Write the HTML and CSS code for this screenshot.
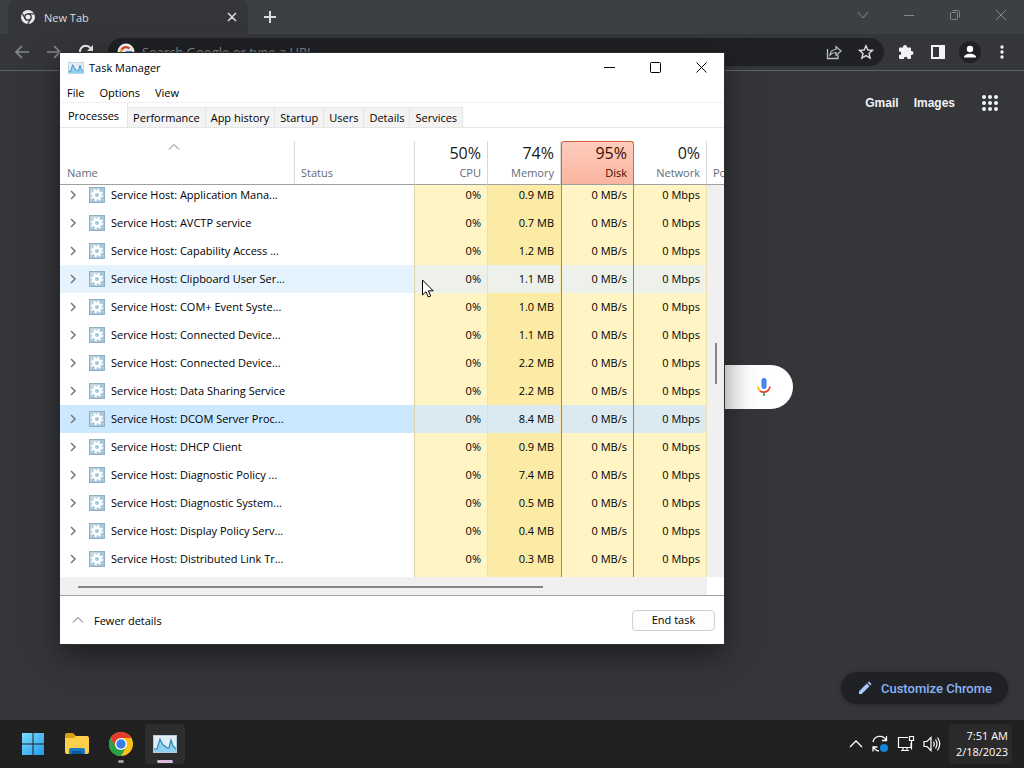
FILE: index.html
```html
<!DOCTYPE html>
<html lang="en">
<head>
  <meta charset="UTF-8">
  <meta name="viewport" content="width=device-width, initial-scale=1.0">
  <title>Desktop</title>
  <link rel="stylesheet" href="styles.css">
</head>
<body>
  <!-- Shared symbols -->
  <svg class="symbols" aria-hidden="true">
    <symbol id="gear" viewBox="0 0 16 16">
      <rect x="0.5" y="0.5" width="15" height="15" fill="#a9c7dc" stroke="#8fb0c4"/>
      <path d="M1 15V1H9Z" fill="#bcd5e4"/>
      <circle cx="8" cy="8" r="3.3" fill="none" stroke="#fff" stroke-width="2.4"/>
      <circle cx="8" cy="8" r="5.2" fill="none" stroke="#fff" stroke-width="2" stroke-dasharray="2.04 2.04"/>
    </symbol>
    <symbol id="expand" viewBox="0 0 8 10">
      <path d="M2 1l4 4-4 4" fill="none" stroke="#777" stroke-width="1.5"/>
    </symbol>
    <symbol id="up" viewBox="0 0 12 8">
      <path d="M1 6.5l5-5 5 5" fill="none" stroke="currentColor"/>
    </symbol>
    <symbol id="graph" viewBox="0 0 24 18">
      <rect x="0.5" y="0.5" width="23" height="17" fill="#e3edf5" stroke="#b9cbd8"/>
      <path d="M1 14l3 0 3-10 3 6 2 1 2 2 2 0 2-8 2 6 3 3v3H1z" fill="#8fd0ee"/>
      <path d="M1 14l3 0 3-10 3 6 2 1 2 2 2 0 2-8 2 6 3 3" fill="none" stroke="#2a86bd" stroke-width="1.2"/>
    </symbol>
  </svg>

  <!-- Browser -->
  <main class="browser">
    <div class="tab-strip">
      <div class="browser-tab">
        <svg width="14" height="14" viewBox="0 0 14 14">
          <circle cx="7" cy="7" r="7" fill="#e8eaed"/>
          <circle cx="7" cy="7" r="3.2" fill="#e8eaed" stroke="#35363a" stroke-width="1.3"/>
          <path d="M7 3.8h6.3M4.2 8.6L1.1 3.3M9.8 8.6L6.7 13.8" stroke="#35363a" stroke-width="1.2"/>
        </svg>
        <span>New Tab</span>
        <button class="plain" aria-label="Close tab"><svg width="10" height="10" viewBox="0 0 10 10"><path d="M1 1l8 8M9 1L1 9" stroke="#dadce0" stroke-width="1.5"/></svg></button>
      </div>
      <button class="plain new-tab" aria-label="New tab"><svg width="14" height="14" viewBox="0 0 14 14"><path d="M7 1v12M1 7h12" stroke="#dadce0" stroke-width="2"/></svg></button>
      <div class="browser-controls">
        <button class="plain" aria-label="Search tabs"><svg width="12" height="12" viewBox="0 0 12 12"><path d="M1 3l5 6 5-6" fill="none" stroke="#85888b"/></svg></button>
        <button class="plain" aria-label="Minimize"><svg width="12" height="12" viewBox="0 0 12 12"><path d="M1 6.5h10" stroke="#85888b"/></svg></button>
        <button class="plain" aria-label="Restore"><svg width="12" height="12" viewBox="0 0 12 12"><rect x="1.5" y="3.5" width="7" height="7" rx="1" fill="none" stroke="#85888b"/><path d="M3.5 1.5h5a2 2 0 0 1 2 2v5" fill="none" stroke="#85888b"/></svg></button>
        <button class="plain" aria-label="Close"><svg width="12" height="12" viewBox="0 0 12 12"><path d="M1 1l10 10M11 1L1 11" stroke="#85888b"/></svg></button>
      </div>
    </div>

    <div class="toolbar">
      <button class="plain" aria-label="Back"><svg width="16" height="16" viewBox="0 0 16 16"><path d="M15 8H2M8 2L2 8l6 6" fill="none" stroke="#85888b" stroke-width="1.7"/></svg></button>
      <button class="plain" aria-label="Forward"><svg width="16" height="16" viewBox="0 0 16 16"><path d="M1 8h13M8 2l6 6-6 6" fill="none" stroke="#85888b" stroke-width="1.7"/></svg></button>
      <button class="plain" aria-label="Reload"><svg width="16" height="16" viewBox="0 0 16 16"><path d="M13.5 10A6 6 0 1 1 12.5 4" fill="none" stroke="#f1f3f4" stroke-width="2"/><path d="M15 1v6H9z" fill="#f1f3f4"/></svg></button>
      <div class="omnibox">
        <svg width="18" height="18" viewBox="0 0 18 18">
          <circle cx="9" cy="9" r="8.5" fill="#fff"/>
          <path d="M12.5 5.5A5 5 0 0 0 4.5 6.8" fill="none" stroke="#ea4335" stroke-width="2.2"/>
          <path d="M4.5 6.8a5 5 0 0 0 0 4.4" fill="none" stroke="#fbbc05" stroke-width="2.2"/>
          <path d="M4.5 11.2a5 5 0 0 0 7.8 1.4" fill="none" stroke="#34a853" stroke-width="2.2"/>
          <path d="M9 9h5a5 5 0 0 1-1.7 3.6" fill="none" stroke="#4285f4" stroke-width="2.2"/>
        </svg>
        <input type="text" placeholder="Search Google or type a URL" aria-label="Address">
        <button class="plain" aria-label="Share"><svg width="16" height="16" viewBox="0 0 16 16"><path d="M1.5 5v9.5H12V11" fill="none" stroke="#bdc1c6" stroke-width="1.3"/><path d="M4 11c.3-3.5 2.5-5.5 6-5.5v-3L15 7l-5 4.5v-3c-2.5 0-4.5.7-6 2.5z" fill="none" stroke="#bdc1c6" stroke-width="1.2"/></svg></button>
        <button class="plain" aria-label="Bookmark"><svg width="16" height="16" viewBox="0 0 16 16"><path d="M8 1.7l1.9 4.3 4.6.4-3.5 3 1.1 4.6L8 11.6 3.9 14 5 9.4l-3.5-3 4.6-.4z" fill="none" stroke="#dadce0" stroke-width="1.4"/></svg></button>
      </div>
      <button class="plain" aria-label="Extensions"><svg width="16" height="16" viewBox="0 0 16 16"><path d="M1 4.500a1 1 0 0 1 1-1h3V3a2 2 0 0 1 4 0v.5h3a1 1 0 0 1 1 1V7h.5a2 2 0 0 1 0 4H13v3a1 1 0 0 1-1 1H9.500v-.5a1.800 1.800 0 0 0-3.600 0v.5H2a1 1 0 0 1-1-1v-3h.5a1.800 1.800 0 0 0 0-3.600H1z" fill="#f1f3f4"/></svg></button>
      <button class="plain" aria-label="Side panel"><svg width="16" height="16" viewBox="0 0 16 16"><path d="M1 1h14v14H1zM3 3v10h6V3z" fill="#f1f3f4" fill-rule="evenodd"/></svg></button>
      <button class="plain" aria-label="Profile"><svg width="22" height="22" viewBox="0 0 22 22"><circle cx="11" cy="11" r="11" fill="#202124"/><circle cx="11" cy="8" r="3.2" fill="#fff"/><path d="M5 16.500c0-5 12-5 12 0z" fill="#fff"/></svg></button>
      <button class="plain" aria-label="Menu"><svg width="16" height="16" viewBox="0 0 16 16"><circle cx="8" cy="3" r="1.7" fill="#f1f3f4"/><circle cx="8" cy="8" r="1.7" fill="#f1f3f4"/><circle cx="8" cy="13" r="1.7" fill="#f1f3f4"/></svg></button>
    </div>

    <div class="new-tab-page">
      <nav class="google-links">
        <a href="#">Gmail</a>
        <a href="#">Images</a>
        <button class="plain" aria-label="Google apps">
          <svg width="18" height="18" viewBox="0 0 18 18"><path d="M3 3h.01M9 3h.01M15 3h.01M3 9h.01M9 9h.01M15 9h.01M3 15h.01M9 15h.01M15 15h.01" stroke="#f1f3f4" stroke-width="4" stroke-linecap="round"/></svg>
        </button>
      </nav>
      <div class="search-box">
        <input type="text" aria-label="Search">
        <button class="plain" aria-label="Search by voice">
          <svg width="18" height="20" viewBox="0 0 18 20">
            <rect x="6.5" y="1" width="5" height="11" rx="2.5" fill="#4285f4"/>
            <path d="M3 9.500a6 6 0 0 0 2 4.300" fill="none" stroke="#fbbc05" stroke-width="1.7"/>
            <path d="M5 13.800c2.500 2.500 9 1.700 10-4.300" fill="none" stroke="#ea4335" stroke-width="1.7"/>
            <path d="M9 15.500V19" stroke="#34a853" stroke-width="1.7"/>
          </svg>
        </button>
      </div>
      <button class="customize">
        <svg width="14" height="14" viewBox="0 0 14 14"><path d="M1 13v-2.700L8.800 2.500l2.700 2.700L3.700 13zM9.600 1.700L11 .5 13.500 3l-1.200 1.400z" fill="#a8c7fa"/></svg>
        Customize Chrome
      </button>
    </div>
  </main>

  <!-- Task Manager -->
  <section class="task-manager">
    <header class="title-bar">
      <svg class="app-icon"><use href="#graph"/></svg>
      <span>Task Manager</span>
      <div class="window-controls">
        <button class="plain" aria-label="Minimize"><svg width="11" height="11" viewBox="0 0 11 11"><path d="M0 5.500h11" stroke="#000"/></svg></button>
        <button class="plain" aria-label="Maximize"><svg width="11" height="11" viewBox="0 0 11 11"><rect x="0.5" y="0.5" width="10" height="10" rx="1" fill="none" stroke="#000"/></svg></button>
        <button class="plain" aria-label="Close"><svg width="11" height="11" viewBox="0 0 11 11"><path d="M0.500 0.500l10 10M10.500 0.500l-10 10" stroke="#000"/></svg></button>
      </div>
    </header>

    <nav class="menu-bar">
      <button class="plain">File</button>
      <button class="plain">Options</button>
      <button class="plain">View</button>
    </nav>

    <div class="tabs" role="tablist">
      <button class="tab active" role="tab">Processes</button>
      <button class="tab" role="tab">Performance</button>
      <button class="tab" role="tab">App history</button>
      <button class="tab" role="tab">Startup</button>
      <button class="tab" role="tab">Users</button>
      <button class="tab" role="tab">Details</button>
      <button class="tab" role="tab">Services</button>
    </div>

    <table class="processes">
      <colgroup>
        <col>
        <col class="col-status">
        <col class="col-usage">
        <col class="col-usage">
        <col class="col-usage">
        <col class="col-usage">
        <col class="col-scroll">
      </colgroup>
      <thead>
        <tr>
          <th class="name"><svg class="sort" width="12" height="8"><use href="#up"/></svg>Name</th>
          <th class="status">Status</th>
          <th class="num"><b>50%</b>CPU</th>
          <th class="num"><b>74%</b>Memory</th>
          <th class="num disk"><b>95%</b>Disk</th>
          <th class="num"><b>0%</b>Network</th>
          <th class="power">Po</th>
        </tr>
      </thead>
      <tbody id="processList"></tbody>
    </table>
    <div class="h-scroll"><div class="h-thumb"></div></div>

    <footer class="footer">
      <button class="plain fewer"><svg width="12" height="8"><use href="#up"/></svg>Fewer details</button>
      <button class="end-task">End task</button>
    </footer>
  </section>

  <svg class="cursor" width="12" height="19" viewBox="0 0 12 19"><path d="M0.500 1v15l3.500-3.300 2.300 5.300 2.400-1-2.300-5.200h4.800z" fill="#fff" stroke="#000"/></svg>

  <!-- Taskbar -->
  <footer class="taskbar">
    <button class="plain app" aria-label="Start">
      <svg width="24" height="24" viewBox="0 0 24 24">
        <defs><linearGradient id="win" x2="1" y2="1"><stop stop-color="#7fdcff"/><stop offset="1" stop-color="#1e9bea"/></linearGradient></defs>
        <path d="M1 1h10.500v10.500H1zM12.500 1H23v10.500H12.500zM1 12.500h10.500V23H1zM12.500 12.500H23V23H12.500z" fill="url(#win)"/>
      </svg>
    </button>
    <button class="plain app" aria-label="File Explorer">
      <svg width="26" height="24" viewBox="0 0 26 24">
        <path d="M1 3a2 2 0 0 1 2-2h6l3 3v3H1z" fill="#d9a014"/>
        <path d="M1 6h9l2-2h11a2 2 0 0 1 2 2v14a2 2 0 0 1-2 2H3a2 2 0 0 1-2-2z" fill="#fcd04a"/>
        <path d="M5 22v-4a2 2 0 0 1 2-2h12a2 2 0 0 1 2 2v4z" fill="#1979c4"/>
        <path d="M8 22v-3h10v3z" fill="#0b5a9c"/>
      </svg>
    </button>
    <button class="plain app" aria-label="Chrome">
      <svg width="24" height="24" viewBox="0 0 24 24">
        <circle cx="12" cy="12" r="12" fill="#fbc116"/>
        <path d="M1.600 6a12 12 0 0 0 10.400 18l5.200-9L12 12 6.800 15z" fill="#25a349"/>
        <path d="M1.600 6A12 12 0 0 1 22.400 6H12L6.800 15z" fill="#e33b2e"/>
        <circle cx="12" cy="12" r="6" fill="#fff"/>
        <circle cx="12" cy="12" r="4.7" fill="#3b7de9"/>
      </svg>
      <i class="running"></i>
    </button>
    <button class="plain app open" aria-label="Task Manager">
      <svg width="24" height="18"><use href="#graph"/></svg>
      <i class="running current"></i>
    </button>

    <div class="tray">
      <svg width="14" height="10" viewBox="0 0 14 10"><path d="M1 8l6-6 6 6" fill="none" stroke="#fff" stroke-width="1.3"/></svg>
      <svg width="18" height="18" viewBox="0 0 18 18">
        <path d="M2 7a7 7 0 0 1 13-2M15.500 1v4.500H11M8 16a7 7 0 0 1-5.500-4M2 16.500V12h4.500" fill="none" stroke="#fff" stroke-width="1.3"/>
        <circle cx="13" cy="13" r="4" fill="#0f85dc"/>
      </svg>
      <svg width="18" height="18" viewBox="0 0 18 18"><path d="M11 2.500H1.500v10H14V8M4 15.500h8M6 12.500v3M10 12.500v3M12.500 1.500h4v4h-4zM14.500 5.500v9" fill="none" stroke="#fff" stroke-width="1.2"/></svg>
      <svg width="18" height="16" viewBox="0 0 18 16"><path d="M1 5.500h3l4-4v13l-4-4H1zM10.500 5.500q1.500 2.500 0 5M12.500 3.500q3 4.500 0 9M14.500 1.500q4.500 6.500 0 13" fill="none" stroke="#fff" stroke-width="1.2"/></svg>
    </div>
    <button class="plain clock">7:51 AM<br>2/18/2023</button>
  </footer>

  <script>
    // name, memory, row state
    const processes = [
      ['Application Mana...', '0.9'],
      ['AVCTP service', '0.7'],
      ['Capability Access ...', '1.2'],
      ['Clipboard User Ser...', '1.1', 'hovered'],
      ['COM+ Event Syste...', '1.0'],
      ['Connected Device...', '1.1'],
      ['Connected Device...', '2.2'],
      ['Data Sharing Service', '2.2'],
      ['DCOM Server Proc...', '8.4', 'selected'],
      ['DHCP Client', '0.9'],
      ['Diagnostic Policy ...', '7.4'],
      ['Diagnostic System...', '0.5'],
      ['Display Policy Serv...', '0.4'],
      ['Distributed Link Tr...', '0.3']
    ];

    // The scrollbar cell spans all the rows
    const scrollCell = `<td class="v-scroll" rowspan="${processes.length}"><div class="v-thumb"></div></td>`;

    document.getElementById('processList').innerHTML = processes.map(([name, memory, state], index) => `
      <tr class="${state || ''}">
        <td class="name"><div class="process">
          <svg width="8" height="10"><use href="#expand"/></svg>
          <svg width="16" height="16"><use href="#gear"/></svg>
          <span>Service Host: ${name}</span>
        </div></td>
        <td class="status"></td>
        <td class="num">0%</td>
        <td class="num memory">${memory} MB</td>
        <td class="num disk">0 MB/s</td>
        <td class="num">0 Mbps</td>
        ${index === 0 ? scrollCell : ''}
      </tr>`).join('');
  </script>
</body>
</html>
```

FILE: styles.css
```css
/* General Styles */
* {
  box-sizing: border-box;
}

body {
  margin: 0;
  min-height: 100vh;
  display: flex;
  flex-direction: column;
  background-color: #35363a;
  font-family: "Segoe UI", "Open Sans", "Noto Sans", sans-serif;
  font-size: 11px;
  overflow: hidden;
}

button, input {
  font: inherit;
  color: inherit;
}

svg {
  display: block;
  flex: none;
}

.symbols {
  position: absolute;
  width: 0;
  height: 0;
}

.plain {
  display: flex;
  align-items: center;
  justify-content: center;
  background: none;
  border: none;
  padding: 0;
}

/* Browser */
.browser {
  flex: 1;
  display: flex;
  flex-direction: column;
}

.tab-strip {
  display: flex;
  align-items: stretch;
  height: 34px;
  padding-left: 8px;
  background-color: #3c4043;
}

.browser-tab {
  display: flex;
  align-items: center;
  gap: 9px;
  width: 240px;
  padding: 0 11px 0 13px;
  border-radius: 8px 8px 0 0;
  background-color: #35363a;
  color: #dadce0;
}

.browser-tab span {
  flex: 1;
}

.new-tab {
  width: 44px;
}

.browser-controls {
  display: flex;
  margin-left: auto;
}

.browser-controls button {
  width: 46px;
  height: 29px;
}

.toolbar {
  display: flex;
  align-items: center;
  gap: 16px;
  height: 37px;
  padding: 0 14px;
  border-bottom: 1px solid #5f6368;
}

.toolbar .plain {
  width: 16px;
}

.omnibox {
  flex: 1;
  display: flex;
  align-items: center;
  gap: 16px;
  height: 28px;
  margin: 0 -2px;
  padding: 0 10px 0 9px;
  border-radius: 14px;
  background-color: #202124;
}

.omnibox input {
  flex: 1;
  margin-left: -9px;
  padding: 0;
  border: none;
  background: none;
  font-size: 13px;
}

.omnibox input::placeholder {
  color: #85888b;
}

/* New Tab Page */
.new-tab-page {
  flex: 1;
  display: flex;
  flex-direction: column;
}

.google-links {
  display: flex;
  justify-content: flex-end;
  align-items: center;
  gap: 15px;
  height: 64px;
  padding-right: 25px;
  font-family: "Liberation Sans", sans-serif;
  font-size: 12px;
  font-weight: bold;
}

.google-links a {
  color: #f1f3f4;
  text-decoration: none;
}

.google-links button {
  margin-left: 11px;
}

.search-box {
  display: flex;
  align-items: center;
  width: 562px;
  max-width: 100%;
  height: 44px;
  margin: 230px auto 0;
  padding: 0 20px;
  border-radius: 22px;
  background-color: #fff;
}

.search-box input {
  flex: 1;
  border: none;
  background: none;
}

.customize {
  display: flex;
  align-items: center;
  gap: 9px;
  align-self: flex-end;
  height: 32px;
  margin: auto 16px 16px;
  padding: 0 16px 0 17px;
  border: none;
  border-radius: 16px;
  background-color: #202124;
  box-shadow: 0 1px 4px rgba(0, 0, 0, 0.3);
  color: #8ab4f8;
  font-family: Roboto, sans-serif;
  font-size: 13px;
  font-weight: 500;
}

/* Task Manager */
.task-manager {
  position: absolute;
  top: 53px;
  left: 60px;
  right: 300px;
  overflow: hidden;
  background-color: #fff;
  color: #000;
  outline: 1px solid #2d2e30;
  box-shadow: 0 10px 30px rgba(0, 0, 0, 0.5);
}

.title-bar {
  display: flex;
  align-items: center;
  gap: 5px;
  height: 29px;
  padding-left: 8px;
}

.app-icon {
  width: 16px;
  height: 12px;
}

.window-controls {
  display: flex;
  margin-left: auto;
}

.window-controls button {
  width: 46px;
  height: 29px;
}

.menu-bar {
  display: flex;
  gap: 15px;
  height: 21px;
  padding-left: 7px;
  border-bottom: 1px solid #f0f0f0;
}

/* Tabs */
.tabs {
  display: flex;
  align-items: flex-end;
  height: 25px;
  border-bottom: 1px solid #e5e5e5;
}

.tab {
  height: 20px;
  padding: 0 5px;
  border: 1px solid #e5e5e5;
  border-width: 1px 1px 0 0;
  background-color: #f3f3f3;
  line-height: 18px;
}

.tab.active {
  height: 24px;
  padding: 0 8px;
  border-top-color: #fff;
  background-color: #fff;
}

/* Process Table */
.processes {
  width: 100%;
  margin-top: 13px;
  border-spacing: 0;
  table-layout: fixed;
}

.col-status {
  width: 120px;
}

.col-usage {
  width: 73px;
}

.col-scroll {
  width: 17px;
}

.processes th {
  height: 44px;
  padding: 0 6px 1px;
  border-right: 1px solid #d9d9d9;
  border-bottom: 1px solid #a0a0a0;
  color: #5f6b78;
  font-weight: normal;
  line-height: 20px;
  text-align: left;
  vertical-align: bottom;
}

.processes th.name {
  padding: 0 13px 1px 7px;
}

.processes th b {
  display: block;
  color: #1a1a1a;
  font-size: 16px;
  font-weight: normal;
}

.processes .num {
  text-align: right;
}

.processes th.disk {
  border: 1px solid #dd6040;
  border-bottom-color: #a0a0a0;
  border-radius: 3px 3px 0 0;
  background-image: linear-gradient(#fdcdbd, #fab59f);
  color: #3c0b00;
}

.processes th.disk b {
  color: #3c0b00;
}

.processes th.power {
  padding-right: 0;
  border-right: none;
  white-space: nowrap;
}

.sort {
  margin: 0 auto 12px;
  color: #777;
}

.processes td {
  padding: 4px 6px;
  line-height: 20px;
}

.processes tr:first-child td {
  padding-top: 0;
}

.processes tr:last-child td {
  padding-bottom: 8px;
}

.process {
  display: flex;
  align-items: center;
  padding-left: 3px;
  white-space: nowrap;
}

.process span {
  margin-left: 6px;
}

.process svg + svg {
  margin-left: 12px;
}

td.status {
  border-right: 1px solid #ddd3a8;
}

td.num {
  border-right: 1px solid #ece0ab;
  background-color: #fff4c4;
}

td.memory {
  border-right-color: #fbeba5;
  background-color: #fbeba5;
}

td.disk {
  border-left: 1px solid #f0643c;
  border-right-color: #f0643c;
}

.hovered td {
  background-color: #e5f3ff;
}

.hovered td.num {
  background-color: #eef1e9;
}

.selected td {
  background-color: #cce8ff;
}

.selected td.num {
  background-color: #dbeaf0;
}

/* Scrollbars */
.processes tr:first-child td.v-scroll {
  padding: 158px 0 0;
  background-color: #f0f0f0;
  vertical-align: top;
}

.v-thumb {
  width: 2px;
  height: 41px;
  margin: 0 auto;
  background-color: #858585;
}

.h-scroll {
  height: 18px;
  margin-right: 17px;
  padding: 9px 0 0 18px;
  background-color: #f0f0f0;
}

.h-thumb {
  width: 74%;
  height: 2px;
  background-color: #858585;
}

/* Footer */
.footer {
  display: flex;
  align-items: center;
  justify-content: space-between;
  height: 49px;
  padding: 0 9px 0 12px;
  border-top: 1px solid #a0a0a0;
}

.fewer {
  gap: 10px;
}

.fewer svg {
  color: #666;
}

.end-task {
  width: 83px;
  height: 21px;
  padding: 0;
  border: 1px solid #d0d0d0;
  border-radius: 4px;
  background-color: #fdfdfd;
  line-height: 18px;
}

.cursor {
  position: absolute;
  top: 279px;
  left: 422px;
}

/* Taskbar */
.taskbar {
  display: flex;
  align-items: center;
  gap: 4px;
  height: 48px;
  padding: 0 12px 0 13px;
  background-color: #202020;
  color: #fff;
}

.app {
  position: relative;
  width: 40px;
  height: 40px;
  border-radius: 4px;
}

.app.open {
  background-color: #2d2d2d;
}

.running {
  position: absolute;
  bottom: 1px;
  width: 6px;
  height: 3px;
  border-radius: 2px;
  background-color: #9a9a9a;
}

.running.current {
  width: 16px;
  background-color: #dcb8dc;
}

.tray {
  display: flex;
  align-items: center;
  gap: 8px;
  margin-left: auto;
}

.clock {
  height: 40px;
  margin-left: 4px;
  padding: 0 4px 0 7px;
  border-radius: 4px;
  background-color: #2a2a2a;
  line-height: 16px;
  text-align: right;
}
```
